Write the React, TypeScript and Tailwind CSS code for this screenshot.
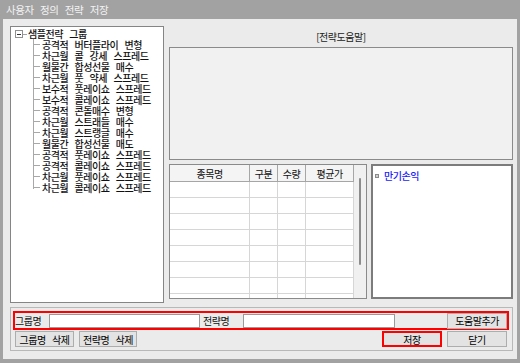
import React from "react";

const treeItems = [
  "공격적 버터플라이 변형",
  "차근월 콜 강세 스프레드",
  "월물간 합성선물 매수",
  "차근월 풋 약세 스프레드",
  "보수적 풋레이쇼 스프레드",
  "보수적 콜레이쇼 스프레드",
  "공격적 콘돌매수 변형",
  "차근월 스트래들 매수",
  "차근월 스트랭글 매수",
  "월물간 합성선물 매도",
  "공격적 풋레이쇼 스프레드",
  "공격적 콜레이쇼 스프레드",
  "차근월 풋레이쇼 스프레드",
  "차근월 콜레이쇼 스프레드",
];

function Btn({ children, w, red }: { children: React.ReactNode; w: string; red?: boolean }) {
  return (
    <div
      className={`${w} h-[16px] flex items-center justify-center bg-[#e3e3e3] text-black ${
        red ? "border-2 border-[#ff0000]" : "border border-[#adadad]"
      }`}
    >
      {children}
    </div>
  );
}

export default function App() {
  return (
    <div className="w-[520px] h-[363px] bg-[#a2a2a2] flex flex-col font-['Noto_Sans_CJK_KR',sans-serif] text-[10px] leading-[11px] tracking-[-0.45px] [word-spacing:4.5px] text-[#111] font-medium">
      {/* Title bar */}
      <div className="h-[19px] flex items-center pl-[6px] text-[#f2f2f2] text-[10.5px] font-normal">
        사용자 정의 전략 저장
      </div>
      {/* Body */}
      <div className="h-[340px] mx-[3px] bg-[#ebebeb] flex flex-col pt-[7px] pl-[7px] pr-[4px]">
        <div className="flex gap-[5px] h-[277px]">
          {/* Tree */}
          <div className="w-[154px] h-full bg-white border border-[#858585] relative">
            {/* root */}
            <div className="absolute left-[4px] top-[3px] w-[8px] h-[8px] border border-[#909090] flex items-center justify-center">
              <div className="w-[4px] h-px bg-[#333]"></div>
            </div>
            <div className="absolute left-[12px] top-[7px] w-[4px] h-px bg-[#a0a0a0]"></div>
            <div className="absolute left-[22px] top-[12px] w-px h-[150px] bg-[#a8a8a8]"></div>
            <div className="absolute left-[17px] top-[1px] h-[11px] flex items-center">
              <span className="leading-[11px] whitespace-nowrap">샘플전략 그룹</span>
            </div>
            {treeItems.map((t, i) => (
              <div
                key={i}
                className="absolute left-[22px] h-[11px] flex items-center"
                style={{ top: 12 + i * 11 }}
              >
                <div className="w-[7px] h-px bg-[#a8a8a8] mr-[2px]"></div>
                <span className="leading-[11px] whitespace-nowrap">{t}</span>
              </div>
            ))}
          </div>
          {/* Right column */}
          <div className="flex-1 flex flex-col">
            <div className="h-[21px] flex items-center justify-center text-[#222] font-normal">[전략도움말]</div>
            <div className="h-[113px] bg-[#f1f1f1] border border-[#8a8a8a]"></div>
            <div className="h-[135px] mt-[4px] flex gap-[4px]">
              {/* grid */}
              <div className="w-[198px] h-full border border-[#8a8a8a] bg-[#f0f0f0] flex overflow-hidden">
                <div className="w-[184px] flex flex-col">
                  <div className="h-[17px] flex bg-[#f4f4f4] border-b border-[#a6a6a6] shrink-0 font-normal">
                    <div className="w-[80px] border-r border-[#a6a6a6] flex items-center justify-center">종목명</div>
                    <div className="w-[28px] border-r border-[#a6a6a6] flex items-center justify-center">구분</div>
                    <div className="w-[28px] border-r border-[#a6a6a6] flex items-center justify-center">수량</div>
                    <div className="flex-1 border-r border-[#a6a6a6] flex items-center justify-center">평균가</div>
                  </div>
                  {Array.from({ length: 8 }).map((_, i) => (
                    <div key={i} className="h-[16px] flex bg-white border-b border-[#d6d6d6] shrink-0">
                      <div className="w-[80px] border-r border-[#d6d6d6]"></div>
                      <div className="w-[28px] border-r border-[#d6d6d6]"></div>
                      <div className="w-[28px] border-r border-[#d6d6d6]"></div>
                      <div className="flex-1 border-r border-[#d6d6d6]"></div>
                    </div>
                  ))}
                </div>
                <div className="flex-1 flex justify-center pt-[13px]">
                  <div className="w-[2px] h-[87px] bg-[#8c8c8c] rounded-sm"></div>
                </div>
              </div>
              {/* right box */}
              <div className="flex-1 h-full bg-white border-2 border-[#7c7c7c] pl-[2px] pt-[4px]">
                <div className="flex items-center h-[11px]">
                  <div className="w-[4px] h-[4px] border border-[#8a8a8a] bg-[#d0d0d0] mr-[5px]"></div>
                  <span className="text-[#1a1aff]">만기손익</span>
                </div>
              </div>
            </div>
          </div>
        </div>
        {/* bottom group */}
        <div className="mt-[4px] h-[44px] border border-[#b8b8b8] flex flex-col pl-[2px] pr-[3px] pt-[3px] font-normal">
          <div className="h-[19px] border-2 border-[#ff0000] flex items-center">
            <span className="w-[34px]">그룹명</span>
            <div className="w-[151px] h-[14px] bg-white border border-[#9a9a9a]"></div>
            <span className="ml-[3px] w-[40px]">전략명</span>
            <div className="w-[152px] h-[14px] bg-white border border-[#9a9a9a]"></div>
            <div className="ml-auto">
              <Btn w="w-[60px]">도움말추가</Btn>
            </div>
          </div>
          <div className="mt-[1px] flex pl-[2px] gap-[5px]">
            <Btn w="w-[59px]">그룹명 삭제</Btn>
            <Btn w="w-[58px]">전략명 삭제</Btn>
            <div className="ml-auto flex gap-[5px] mr-[2px]">
              <Btn w="w-[60px]" red>저장</Btn>
              <Btn w="w-[60px]">닫기</Btn>
            </div>
          </div>
        </div>
      </div>
    </div>
  );
}
